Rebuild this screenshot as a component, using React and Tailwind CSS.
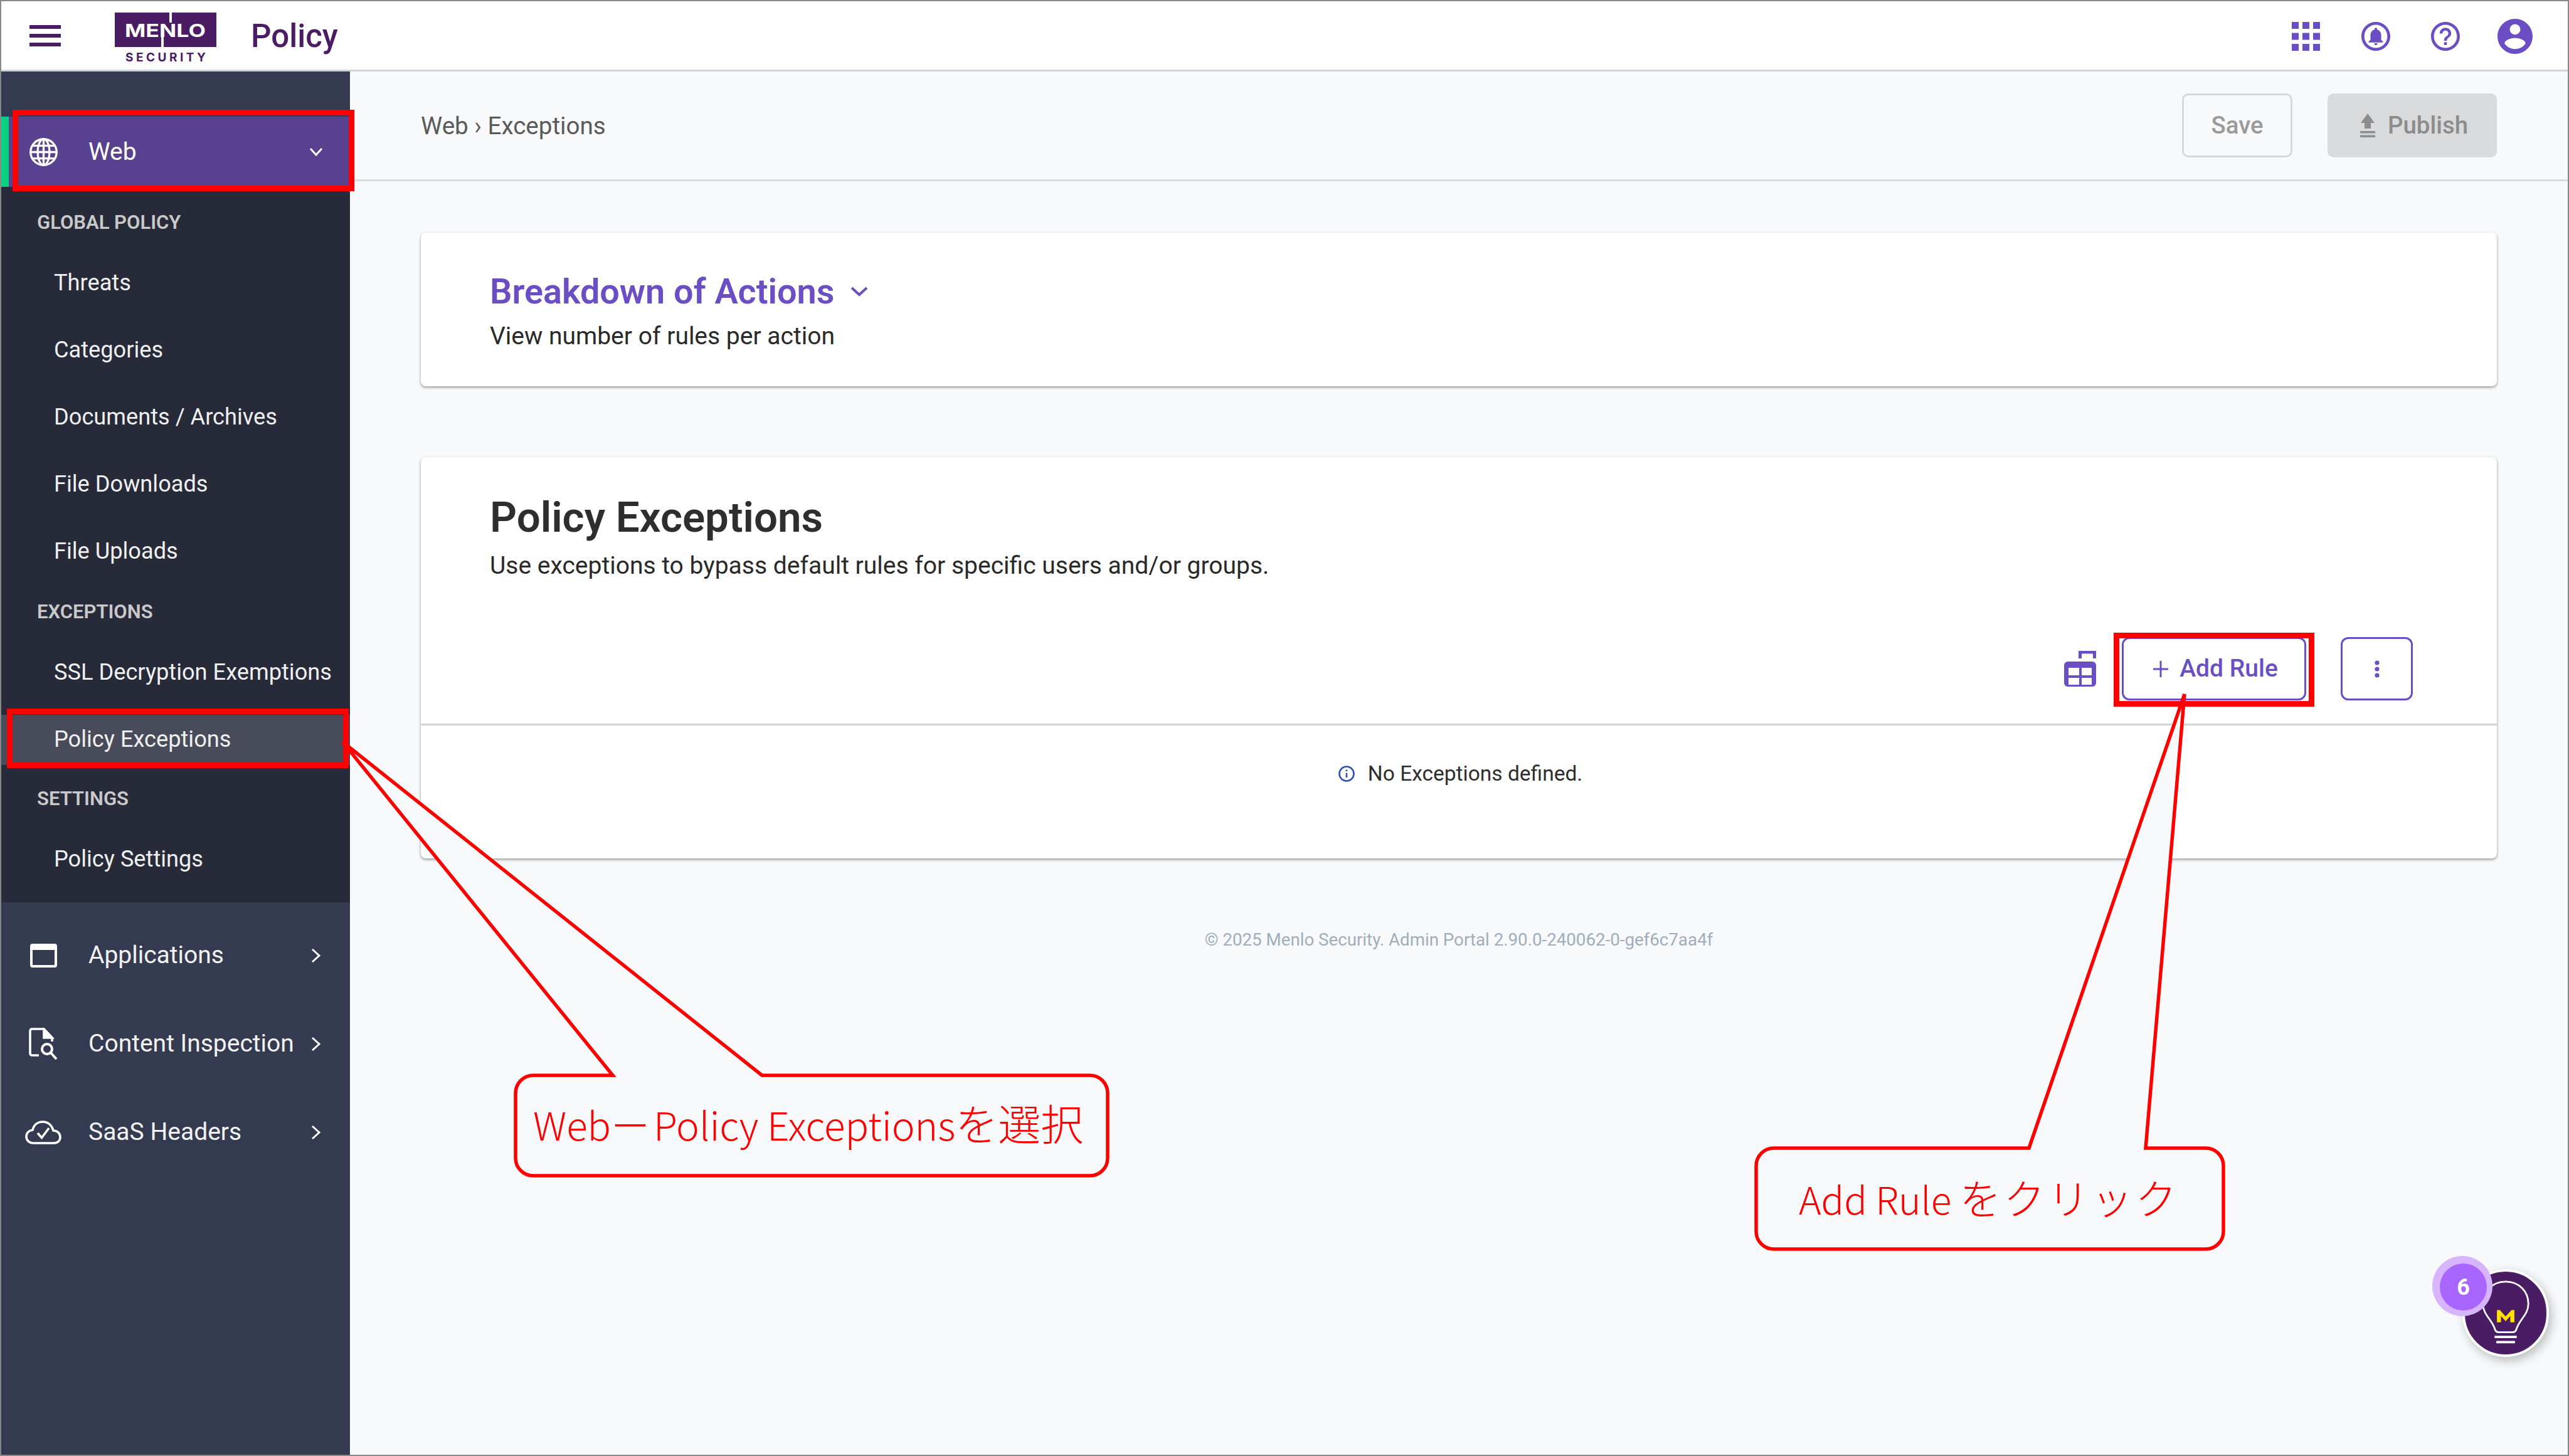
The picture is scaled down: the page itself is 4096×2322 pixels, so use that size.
const PURPLE = "#6b4dc4";

function Hamburger() {
  return (
    <div className="flex flex-col gap-[8px] w-[50px]">
      <div className="h-[6px] bg-[#4a1c63]" />
      <div className="h-[6px] bg-[#4a1c63]" />
      <div className="h-[6px] bg-[#4a1c63]" />
    </div>
  );
}

function Logo() {
  return (
    <svg width="162" height="84" viewBox="0 0 162 84">
      <rect x="0" y="0" width="162" height="55" fill="#4a1c63" />
      <text x="16" y="39" fontFamily="Inter" fontWeight="700" fontSize="29" textLength="129" lengthAdjust="spacingAndGlyphs" fill="#fff">
        MENLO
      </text>
      <path d="M89 0V16M76 36V55" stroke="#fff" strokeWidth="4" fill="none" />
      <text x="17" y="78" fontFamily="Inter" fontWeight="700" fontSize="19" textLength="128" fill="#4a1c63">
        SECURITY
      </text>
    </svg>
  );
}

function HeaderIcons() {
  return (
    <div className="flex items-center">
      <svg width="45" height="46" viewBox="0 0 45 46" fill={PURPLE}>
        <rect x="0" y="0" width="11" height="11" />
        <rect x="17" y="0" width="11" height="11" />
        <rect x="34" y="0" width="11" height="11" />
        <rect x="0" y="17.5" width="11" height="11" />
        <rect x="17" y="17.5" width="11" height="11" />
        <rect x="34" y="17.5" width="11" height="11" />
        <rect x="0" y="35" width="11" height="11" />
        <rect x="17" y="35" width="11" height="11" />
        <rect x="34" y="35" width="11" height="11" />
      </svg>
      <svg className="ml-[66px]" width="46" height="46" viewBox="2 2 20 20" fill={PURPLE}>
        <path d="M12 2C6.48 2 2 6.48 2 12s4.48 10 10 10 10-4.48 10-10S17.52 2 12 2zm0 18c-4.41 0-8-3.59-8-8s3.59-8 8-8 8 3.59 8 8-3.59 8-8 8z" />
        <path transform="translate(12 12) scale(0.62) translate(-12 -12.2)" d="M12 22c1.1 0 2-.9 2-2h-4c0 1.1.9 2 2 2zm6-6v-5c0-3.07-1.63-5.64-4.5-6.32V4c0-.83-.67-1.5-1.5-1.5s-1.5.67-1.5 1.5v.68C7.64 5.36 6 7.92 6 11v5l-2 2v1h16v-1l-2-2z" />
      </svg>
      <svg className="ml-[65px]" width="46" height="46" viewBox="2 2 20 20" fill={PURPLE}>
        <path d="M11 18h2v-2h-2v2zm1-16C6.48 2 2 6.48 2 12s4.48 10 10 10 10-4.48 10-10S17.52 2 12 2zm0 18c-4.41 0-8-3.59-8-8s3.59-8 8-8 8 3.59 8 8-3.59 8-8 8zm0-14c-2.21 0-4 1.79-4 4h2c0-1.1.9-2 2-2s2 .9 2 2c0 2-3 1.75-3 5h2c0-2.25 3-2.5 3-5 0-2.21-1.79-4-4-4z" />
      </svg>
      <svg className="ml-[60px]" width="56" height="56" viewBox="2 2 20 20" fill={PURPLE}>
        <path d="M12 2C6.48 2 2 6.48 2 12s4.48 10 10 10 10-4.48 10-10S17.52 2 12 2zm0 3c1.66 0 3 1.34 3 3s-1.34 3-3 3-3-1.34-3-3 1.34-3 3-3zm0 14.2c-2.5 0-4.71-1.28-6-3.22.03-1.99 4-3.08 6-3.08 1.99 0 5.97 1.09 6 3.08-1.29 1.94-3.5 3.22-6 3.22z" />
      </svg>
    </div>
  );
}

function Header() {
  return (
    <header className="h-[112px] shrink-0 flex items-center bg-white border-b-[3px] border-[#d0d4da]">
      <div className="ml-[45px]">
        <Hamburger />
      </div>
      <div className="ml-[86px] mt-[10px]">
        <Logo />
      </div>
      <div className="ml-[55px] mt-[2px] text-[51px] leading-[60px] font-medium text-[#4a1c63]">Policy</div>
      <div className="ml-auto mr-[56px] mt-[2px]">
        <HeaderIcons />
      </div>
    </header>
  );
}

function Globe() {
  return (
    <svg width="47" height="47" viewBox="0 0 24 24" fill="none" stroke="#fff" strokeWidth="1.7">
      <circle cx="12" cy="12" r="10.6" />
      <ellipse cx="12" cy="12" rx="4.8" ry="10.6" />
      <path d="M12 1.4V22.6M1.4 12H22.6M3 6.8H21M3 17.2H21" />
    </svg>
  );
}

function AppIcon() {
  return (
    <svg width="43" height="38" viewBox="0 0 43 38">
      <rect x="2" y="2" width="39" height="34" rx="2" fill="none" stroke="#fff" strokeWidth="4" />
      <rect x="2" y="2" width="39" height="8" fill="#fff" />
    </svg>
  );
}

function InspectIcon() {
  return (
    <svg width="46" height="52" viewBox="0 0 46 52" fill="none" stroke="#fff" strokeWidth="3.6">
      <path d="M16 44H5a3 3 0 0 1-3-3V5a3 3 0 0 1 3-3H24L37 16V22" />
      <path d="M24 2V16H37L24 2Z" fill="#fff" />
      <circle cx="29" cy="34" r="8" strokeWidth="4" />
      <path d="M35 40L44 50" strokeWidth="4" />
    </svg>
  );
}

function CloudIcon() {
  return (
    <svg width="58" height="38" viewBox="0 0 58 38" fill="none" stroke="#fff" strokeWidth="3.6">
      <path d="M13 36C6 36 2 31 2 25.5C2 20 6 16 12 15C14 7 20 2 28 2C37 2 43 8 45 16C52 16 56 21 56 26.5C56 32 52 36 45 36Z" />
      <path d="M20 20L26.5 27.5L38 12" />
    </svg>
  );
}

function NavRow({ icon, label }) {
  return (
    <div className="h-[141px] flex items-center">
      <div className="w-[100px] pl-[38px] flex items-center">
        <div className="w-[62px] flex justify-center -ml-[2px]">{icon}</div>
      </div>
      <span className="ml-[39px] text-[39px] text-[#f2f2f2]">{label}</span>
      <svg className="ml-auto mr-[46px]" width="16" height="24" viewBox="0 0 16 24" fill="none" stroke="#fff" strokeWidth="3">
        <path d="M2 2L13 12L2 22" />
      </svg>
    </div>
  );
}

function SideLink({ label, active }) {
  return (
    <div className="h-[107px] flex items-center">
      <div className={`h-[80px] w-full flex items-center pl-[84px] text-[36.2px] text-[#f0f0f0] ${active ? "bg-[#484c5a]" : ""}`}>
        {label}
      </div>
    </div>
  );
}

function SideHeading({ label, className }) {
  return <div className={`pl-[57px] text-[31px] font-semibold text-[#c9c9c9] leading-[40px] ${className}`}>{label}</div>;
}

function Sidebar() {
  return (
    <aside className="w-[556px] shrink-0 bg-[#343a4f] pt-[72px]">
      <div className="relative h-[112px] bg-[#58418f] flex items-center">
        <div className="absolute left-0 top-0 bottom-0 w-[12px] bg-[#0ad082]" />
        <div className="pl-[44px]">
          <Globe />
        </div>
        <span className="ml-[48px] text-[39px] text-white">Web</span>
        <svg className="ml-auto mr-[43px]" width="22" height="14" viewBox="0 0 22 14" fill="none" stroke="#fff" strokeWidth="3">
          <path d="M2 2L11 12L20 2" />
        </svg>
      </div>
      <div className="bg-[#272a39] h-[1141px] pt-[37px]">
        <SideHeading label="GLOBAL POLICY" className="mb-[23px]" />
        <SideLink label="Threats" />
        <SideLink label="Categories" />
        <SideLink label="Documents / Archives" />
        <SideLink label="File Downloads" />
        <SideLink label="File Uploads" />
        <SideHeading label="EXCEPTIONS" className="mt-[23px] mb-[23px]" />
        <SideLink label="SSL Decryption Exemptions" />
        <SideLink label="Policy Exceptions" active />
        <SideHeading label="SETTINGS" className="mt-[21px] mb-[23px]" />
        <SideLink label="Policy Settings" />
      </div>
      <div className="pt-[14px]">
        <NavRow icon={<AppIcon />} label="Applications" />
        <NavRow icon={<InspectIcon />} label="Content Inspection" />
        <NavRow icon={<CloudIcon />} label="SaaS Headers" />
      </div>
    </aside>
  );
}

function TopBar() {
  return (
    <div className="h-[175px] flex items-center justify-between pl-[113px] pr-[113px] border-b-[3px] border-[#d8dbe0]">
      <div className="text-[38.6px] text-[#5a5a5a] mt-[2px]">Web › Exceptions</div>
      <div className="flex items-center gap-[56px] mt-[-1px]">
        <div className="h-[102px] w-[176px] flex items-center justify-center rounded-[10px] border-[3px] border-[#d7d8da] text-[38.4px] font-medium text-[#9a9a9a]">
          Save
        </div>
        <div className="h-[102px] w-[270px] flex items-center justify-center gap-[20px] pl-[6px] rounded-[10px] bg-[#d9dadc] text-[38.4px] font-medium text-[#8c8c8c]">
          <svg width="24" height="38" viewBox="0 0 24 38" fill="#8c8c8c">
            <path d="M12 0L23 15H17V24H7V15H1Z" />
            <rect x="0" y="28" width="24" height="3.5" />
            <rect x="0" y="34.5" width="24" height="3.5" />
          </svg>
          Publish
        </div>
      </div>
    </div>
  );
}

function Toolbar() {
  return (
    <div className="flex items-center justify-end pr-[134px] mt-[89px]">
      <svg width="51" height="57" viewBox="0 0 51 57" fill={PURPLE}>
        <path d="M23 12V0H51V12H46V4.5H28V12Z" />
        <path d="M6 17H45a6 6 0 0 1 6 6V51a6 6 0 0 1-6 6H6a6 6 0 0 1-6-6V23a6 6 0 0 1 6-6Z" />
        <rect x="7" y="27" width="17" height="12" fill="#fff" />
        <rect x="28" y="27" width="16" height="12" fill="#fff" />
        <rect x="7" y="43" width="17" height="11" fill="#fff" />
        <rect x="28" y="43" width="16" height="11" fill="#fff" />
      </svg>
      <div className="ml-[41px] h-[101px] w-[294px] flex items-center justify-center gap-[18px] pl-[5px] rounded-[12px] border-[3px] border-[#6b4dc4] text-[39px] font-medium text-[#6b4dc4]">
        <svg width="24" height="26" viewBox="0 0 24 26" stroke={PURPLE} strokeWidth="3">
          <path d="M12 0V26M0 13H24" />
        </svg>
        Add Rule
      </div>
      <div className="ml-[55px] h-[101px] w-[115px] flex items-center justify-center rounded-[12px] border-[3px] border-[#6b4dc4]">
        <svg width="8" height="28" viewBox="0 0 8 28" fill={PURPLE}>
          <circle cx="4" cy="4" r="3.6" />
          <circle cx="4" cy="14" r="3.6" />
          <circle cx="4" cy="24" r="3.6" />
        </svg>
      </div>
    </div>
  );
}

function Main() {
  return (
    <main className="flex-1 bg-[#f8f9fb]">
      <TopBar />
      <div className="px-[113px]">
        <section className="mt-[82px] h-[245px] bg-white rounded-[8px] shadow-[0_2px_4px_rgba(0,0,0,0.4)] pl-[110px] pt-[59px]">
          <div className="flex items-center gap-[26px] text-[55.8px] leading-[70px] font-semibold text-[#6b4dc4]">
            Breakdown of Actions
            <svg width="28" height="16" viewBox="0 0 28 16" fill="none" stroke={PURPLE} strokeWidth="4">
              <path d="M2 2L14 13L26 2" />
            </svg>
          </div>
          <div className="mt-[11px] text-[39px] leading-[50px] text-[#2a2a2a]">View number of rules per action</div>
        </section>
        <section className="mt-[113px] h-[640px] bg-white rounded-[8px] shadow-[0_2px_4px_rgba(0,0,0,0.4)] pt-[56px]">
          <div className="pl-[110px] text-[67.2px] leading-[80px] font-semibold text-[#2e2e2e]">Policy Exceptions</div>
          <div className="pl-[110px] mt-[12px] text-[39px] leading-[50px] text-[#2a2a2a]">
            Use exceptions to bypass default rules for specific users and/or groups.
          </div>
          <Toolbar />
          <div className="mt-[37px] border-b-[3px] border-[#d0d5dc]" />
          <div className="flex items-center justify-center gap-[21px] pl-[5px] pt-[54px] text-[33.5px] leading-[46px] text-[#2e2e2e]">
            <svg width="26" height="26" viewBox="0 0 26 26" fill="none" stroke="#2f4fc0" strokeWidth="2.6">
              <circle cx="13" cy="13" r="11.5" />
              <path d="M13 11.5V19M13 6.5V9" />
            </svg>
            No Exceptions defined.
          </div>
        </section>
        <div className="mt-[110px] text-center text-[27.7px] leading-[40px] text-[#a0aebb]">
          © 2025 Menlo Security. Admin Portal 2.90.0-240062-0-gef6c7aa4f
        </div>
      </div>
    </main>
  );
}

function Annotations() {
  return (
    <div className="absolute inset-0 pointer-events-none font-['Noto_Sans_CJK_JP',sans-serif] font-light">
      <svg className="absolute inset-0" width="4092" height="2318" viewBox="2 2 4092 2318" fill="none" stroke="#ff0000">
        <rect x="24.5" y="179.5" width="536" height="121" strokeWidth="9" />
        <rect x="15.5" y="1134.5" width="536" height="86" strokeWidth="9" />
        <rect x="3374.5" y="1013.5" width="311" height="109" strokeWidth="9" />
        <path
          d="M850 1715H977L546 1183L1215 1715H1738a28 28 0 0 1 28 28V1847a28 28 0 0 1-28 28H850a28 28 0 0 1-28-28V1743a28 28 0 0 1 28-28Z"
          fill="#f8f9fb"
          strokeWidth="5.5"
        />
        <path
          d="M2828 1831H3235L3483 1107L3421 1831H3517a28 28 0 0 1 28 28V1964a28 28 0 0 1-28 28H2828a28 28 0 0 1-28-28V1859a28 28 0 0 1 28-28Z"
          fill="#f8f9fb"
          strokeWidth="5.5"
        />
      </svg>
      <div className="absolute left-[848px] top-[1748px] text-[62px] leading-[80px] whitespace-nowrap text-[#ff0000]">
        Web<span className="mr-[6px]">ー</span>Policy Exceptions<span className="text-[68px]">を選択</span>
      </div>
      <div className="absolute left-[2866px] top-[1866px] text-[60.5px] leading-[80px] whitespace-nowrap text-[#ff0000]">
        Add Rule <span className="text-[66px] tracking-[4px]">をクリック</span>
      </div>
    </div>
  );
}

function Tips() {
  return (
    <div className="absolute left-[3876px] top-[2001px] w-[186px] h-[161px]">
      <div className="absolute right-0 bottom-0 w-[138px] h-[140px] rounded-full bg-[#4a1c63] border-[4px] border-white shadow-[4px_6px_16px_rgba(0,0,0,0.25)] flex items-center justify-center">
        <svg width="82" height="104" viewBox="0 0 88 112" fill="none" stroke="#fff" strokeWidth="3">
          <path d="M44 2C20 2 5 20 5 40C5 58 19 66 25 82C26 87 28 89 32 89H56C60 89 62 87 63 82C69 66 83 58 83 40C83 20 68 2 44 2Z" />
          <path d="M25 97H63M28 106H60" strokeWidth="4" />
          <path d="M29 72V51H34L44 62L54 51H59V72H52V61L44 70L36 61V72Z" fill="#ffe000" stroke="none" />
        </svg>
      </div>
      <div className="absolute left-0 top-0 w-[96px] h-[96px] rounded-full bg-[#d6b5fe]" />
      <div className="absolute left-[12px] top-[12px] w-[75px] h-[75px] rounded-full bg-[#a966ff] flex items-center justify-center text-[36px] font-bold text-white">
        6
      </div>
    </div>
  );
}

export default function App() {
  return (
    <div className="relative w-[4096px] h-[2322px] overflow-hidden flex flex-col border-2 border-[#888888] font-['Roboto','Noto_Sans_CJK_JP',sans-serif]">
      <Header />
      <div className="flex flex-1 min-h-0">
        <Sidebar />
        <Main />
      </div>
      <Annotations />
      <Tips />
    </div>
  );
}
